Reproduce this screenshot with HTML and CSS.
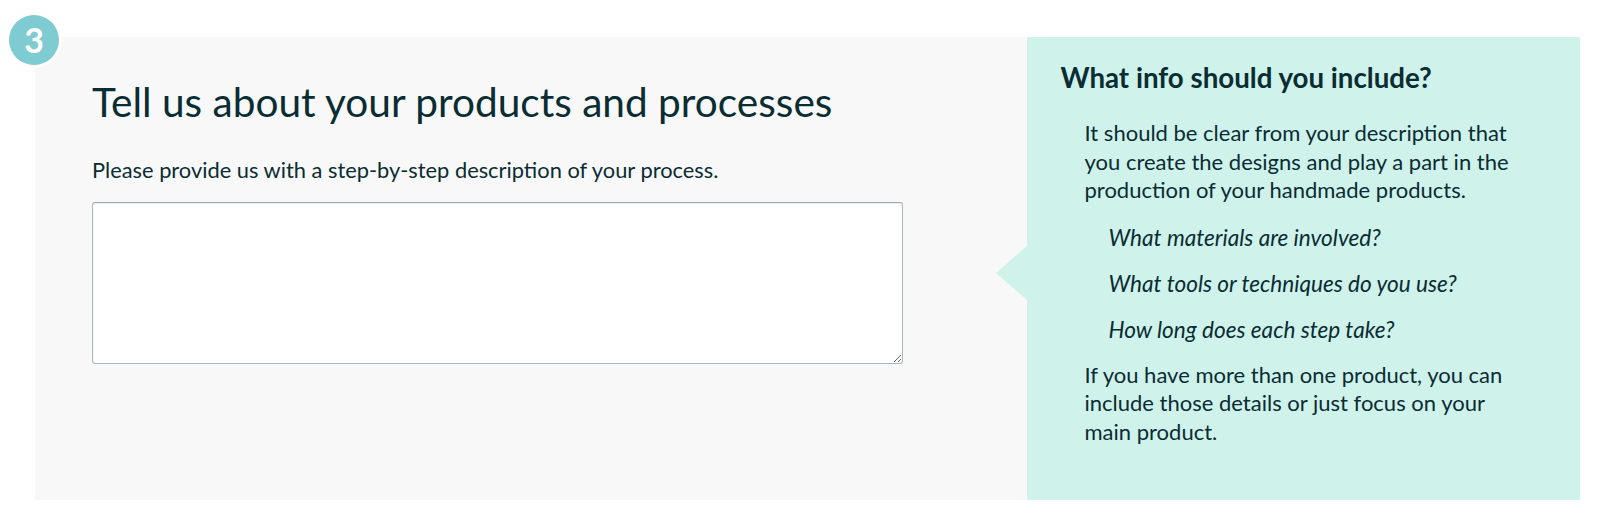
FILE: index.html
```html
<!DOCTYPE html>
<html lang="en">
<head>
<meta charset="utf-8">
<title>Tell us about your products and processes</title>
<link rel="stylesheet" href="styles.css">
</head>
<body>
<div class="page">
  <section class="step">
    <span class="step-badge">3</span>
    <div class="step-main">
      <h2 class="step-title">Tell us about your products and processes</h2>
      <label class="step-label" for="process">Please provide us with a step-by-step description of your process.</label>
      <textarea id="process" class="step-input"></textarea>
    </div>
    <aside class="tip">
      <h3 class="tip-title">What info should you include?</h3>
      <div class="tip-body">
        <p class="tip-intro">It should be clear from your description that you create the designs and play a part in the production of your handmade products.</p>
        <p class="tip-q">What materials are involved?</p>
        <p class="tip-q">What tools or techniques do you use?</p>
        <p class="tip-q tip-q-last">How long does each step take?</p>
        <p>If you have more than one product, you can include those details or just focus on your main product.</p>
      </div>
    </aside>
  </section>
</div>
</body>
</html>
```
FILE: styles.css
```css
html, body {
  margin: 0;
  padding: 0;
  background: #ffffff;
}
body {
  font-family: "Lato", "Open Sans", sans-serif;
  color: #0a2c33;
}
.page {
  padding: 37px 20px 20px 35px;
}
.step {
  position: relative;
  display: flex;
  height: 463px;
}
.step-badge {
  position: absolute;
  left: -26px;
  top: -22px;
  width: 50px;
  height: 50px;
  border-radius: 50%;
  background: #7ecbd1;
  box-shadow: 0 0 0 3px #ffffff;
  color: #ffffff;
  font-size: 34px;
  font-weight: 700;
  line-height: 50px;
  text-align: center;
  z-index: 2;
}
.step-main {
  flex: 1;
  background: #f8f8f8;
  padding: 41px 0 0 57px;
  display: flex;
  flex-direction: column;
  align-items: flex-start;
}
.step-title {
  margin: 0;
  font-size: 40.6px;
  line-height: 48px;
  font-weight: 400;
  color: #0a2c33;
}
.step-label {
  margin-top: 30px;
  font-size: 21.84px;
  line-height: 28px;
}
.step-input {
  box-sizing: border-box;
  margin: 18px 0 0;
  width: 811px;
  height: 162px;
  border: 1px solid #a9b7b8;
  border-top-color: #9aaaab;
  border-radius: 3px;
  background: #ffffff;
  box-shadow: inset 0 1px 2px rgba(0, 0, 0, 0.08);
  font-family: inherit;
  font-size: 18px;
  padding: 6px 8px;
  outline: none;
}
.tip {
  position: relative;
  width: 553px;
  background: #cff2eb;
  padding: 23.6px 0 0 33.5px;
  box-sizing: border-box;
}
.tip::before {
  content: "";
  position: absolute;
  left: -31px;
  top: 209px;
  border-right: 31px solid #cff2eb;
  border-top: 27px solid transparent;
  border-bottom: 27px solid transparent;
}
.tip-title {
  margin: 0;
  font-size: 27.7px;
  line-height: 34px;
  font-weight: 700;
}
.tip-body {
  margin: 24.6px 0 0 24px;
  width: 440px;
}
.tip-body p {
  margin: 0 0 17.7px;
  font-size: 22px;
  line-height: 28.6px;
}
.tip-body .tip-intro {
  margin-bottom: 18.7px;
}
.tip-body .tip-q {
  margin-left: 24px;
  font-style: italic;
  font-size: 22.6px;
}
.tip-body .tip-q-last {
  margin-bottom: 15.7px;
}
```
